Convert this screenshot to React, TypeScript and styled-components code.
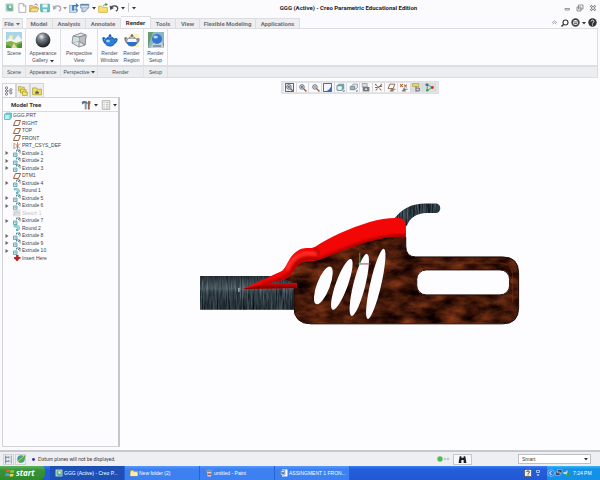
import React from "react";
import styled, { createGlobalStyle, css } from "styled-components";

const ui = `"Liberation Sans", Arial, sans-serif`;
const bold = `Roboto, "Liberation Sans", sans-serif`;

const GlobalStyle = createGlobalStyle`
  * { box-sizing: border-box; }
  body { margin: 0; background: #fbfbfd; color: #3a3b40; font: 5px/8px ${ui}; }
  button, select { font: inherit; color: inherit; margin: 0; padding: 0; border: 0; background: none; }
  svg { display: block; flex: none; }
`;

const Window = styled.div`
  min-height: 100vh;
  display: flex;
  flex-direction: column;
`;

/* ---------- title bar ---------- */
const TitleBar = styled.header`
  display: grid;
  grid-template-columns: auto 1fr auto;
  align-items: center;
  height: 15px;
`;
const QuickAccess = styled.div`
  display: flex;
  align-items: center;
  padding-left: 4px;
`;
const IconButton = styled.button<{ $w?: number }>`
  width: ${(p) => p.$w ?? 11}px;
  height: 11px;
  display: flex;
  align-items: center;
  justify-content: center;
`;
const Divider = styled.span`
  width: 1px;
  height: 9px;
  margin: 0 2px;
  background: #c8c9cd;
`;
const Title = styled.h1`
  margin: 0;
  font: bold 6px/8px ${bold};
  text-align: center;
  color: #222327;
  white-space: nowrap;
`;
const WindowButtons = styled.div<{ $gap: number }>`
  display: flex;
  justify-content: flex-end;
  gap: ${(p) => p.$gap}px;
  padding-right: 2px;
`;

/* ---------- ribbon ---------- */
const TabRow = styled.nav`
  display: flex;
  align-items: flex-end;
  height: 13px;
  padding-left: 2px;
`;
const RibbonTab = styled.button<{ $w: number; $active?: boolean }>`
  width: ${(p) => p.$w}px;
  height: 10px;
  display: flex;
  align-items: center;
  justify-content: center;
  gap: 2px;
  font: bold 6px/8px ${bold};
  color: #6f7076;
  background: #eeeef1;
  border: 1px solid #dcdde0;
  border-width: 1px 1px 0 0;
  white-space: nowrap;
  ${(p) =>
    p.$active &&
    css`
      height: 12px;
      padding-top: 1px;
      color: #2c2d31;
      background: #fcfcfe;
    `}
`;
const FileTab = styled(RibbonTab)`
  margin-right: 3px;
`;
const Spacer = styled.span`
  flex: 1;
`;
const Ribbon = styled.section`
  display: flex;
  margin: 0 2px;
  height: 50px;
  border: 1px solid #dcdde1;
  background: linear-gradient(#fcfcfe 36px, #dddee1 36px, #dddee1 38px, #ecedef 38px);
`;
const Group = styled.div<{ $w: number }>`
  width: ${(p) => p.$w}px;
  display: grid;
  grid-template-rows: 38px 1fr;
  border-right: 1px solid #e0e1e4;
`;
const GroupItems = styled.div`
  display: flex;
  justify-content: center;
`;
const RibbonButton = styled.button`
  min-width: 22px;
  display: flex;
  flex-direction: column;
  align-items: center;
  padding-top: 3px;
  line-height: 7px;
  color: #4a4b50;
  white-space: nowrap;
`;
const ButtonText = styled.span`
  margin-top: 2px;
`;
const Line = styled.span`
  display: flex;
  justify-content: center;
  align-items: center;
  gap: 2px;
`;
const GroupLabel = styled.div`
  display: flex;
  align-items: center;
  justify-content: center;
  gap: 1px;
  color: #4a4b50;
`;

/* ---------- work area ---------- */
const Work = styled.main`
  flex: 1;
  display: grid;
  grid-template-columns: 118px 1fr;
  padding-left: 2px;
`;
const Sidebar = styled.aside`
  display: flex;
  flex-direction: column;
  padding: 5px 0 3px;
`;
const PanelTabs = styled.div`
  display: flex;
`;
const PanelTab = styled.button<{ $active?: boolean }>`
  width: 14px;
  height: 14px;
  display: flex;
  align-items: center;
  justify-content: center;
  border: 1px solid #d5d6da;
  border-bottom-width: 0;
  background: ${(p) => (p.$active ? "#fcfcfe" : "#eeeff2")};
`;
const Panel = styled.section`
  flex: 1;
  border: 1px solid #d2d3d7;
  border-right: 2px solid #c6c7cb;
  background: #fcfcfe;
`;
const PanelHeader = styled.div`
  display: flex;
  align-items: center;
  height: 14px;
  padding-left: 8px;
  border-bottom: 1px solid #d9dade;
`;
const PanelTitle = styled.h2`
  margin: 0;
  flex: 1;
  font: bold 6px/8px ${bold};
  color: #333439;
`;
const Tree = styled.ul`
  list-style: none;
  margin: 0;
  padding: 0;
  height: 150px;
  display: grid;
  grid-auto-rows: minmax(0, 1fr);
`;
const TreeRow = styled.li<{ $root?: boolean; $dim?: boolean }>`
  display: grid;
  grid-template-columns: ${(p) => (p.$root ? "0 8px 1fr" : "9px 8px 1fr")};
  grid-template-rows: 100%;
  align-items: center;
  column-gap: 1px;
  line-height: 7px;
  color: ${(p) => (p.$dim ? "#c3c4c8" : "#3e3f44")};
  white-space: nowrap;
`;
const Expander = styled.button`
  width: 8px;
  height: 7px;
  display: flex;
  align-items: center;
  justify-content: center;
`;
const Viewport = styled.section`
  display: flex;
  flex-direction: column;
  align-items: center;
  padding-top: 3px;
  background: #fdfdff;
`;
const ViewToolbar = styled.div`
  width: 158px;
  height: 13px;
  display: grid;
  grid-template-columns: repeat(12, 1fr);
  padding: 1px 2px;
  border: 1px solid #dedfe2;
  background: #e3e4e8;
`;
const ViewButton = styled.button<{ $on?: boolean }>`
  display: flex;
  align-items: center;
  justify-content: center;
  border-right: 1px solid #d7d8dc;
  background: ${(p) => (p.$on ? "#dcdde1" : "#fafafc")};
`;
const ModelArea = styled.div`
  width: 67%;
  margin-top: 109px;
`;

/* ---------- status bar ---------- */
const StatusBar = styled.footer`
  display: flex;
  align-items: center;
  height: 16px;
  padding: 0 9px 0 3px;
  border-top: 2px solid #c7c8cb;
  background: #eeeff2;
`;
const StatusToggle = styled.button`
  width: 11px;
  height: 11px;
  margin-right: 1px;
  display: flex;
  align-items: center;
  justify-content: center;
  border: 1px solid #d0d1d5;
`;
const Message = styled.p`
  margin: 0 0 0 5px;
  flex: 1;
  display: flex;
  align-items: center;
  gap: 3px;
  font-family: Lato, ${ui};
`;
const FindButton = styled.button`
  width: 19px;
  height: 11px;
  margin: 0 46px 0 3px;
  display: flex;
  align-items: center;
  justify-content: center;
  border: 1px solid #c6c7cb;
  background: #f8f8fa;
`;
const FilterBox = styled.div`
  display: flex;
  width: 73px;
  height: 10px;
  align-items: center;
  padding-right: 2px;
  border: 1px solid #bfc0c6;
  background: #fff;
`;
const Filter = styled.select`
  flex: 1;
  height: 8px;
  padding-left: 3px;
  appearance: none;
  outline: 0;
`;

/* ---------- taskbar ---------- */
const Taskbar = styled.footer`
  display: flex;
  height: 14px;
  color: #fff;
  background: linear-gradient(#3d80ee, #245edc 3px, #2258d4);
`;
const Start = styled.button`
  width: 45px;
  margin-right: 5px;
  display: flex;
  align-items: center;
  gap: 1px;
  padding-left: 5px;
  border-radius: 0 4px 6px 0;
  font: italic bold 8px/12px "Open Sans", "Noto Sans", sans-serif;
  color: #fff;
  background: linear-gradient(#5eb35e, #389238 4px, #2f8a2f);
`;
const Task = styled.button<{ $active?: boolean }>`
  flex: 0 1 75px;
  display: flex;
  align-items: center;
  gap: 1px;
  padding-left: 5px;
  border-right: 1px solid #2a62d6;
  color: #fff;
  white-space: nowrap;
  background: ${(p) => (p.$active ? "#1d4fb5" : "linear-gradient(#5a98fa, #3c80f2 3px)")};
`;
const TrayOuter = styled.div`
  display: flex;
  align-items: center;
  gap: 2px;
  margin-left: auto;
  padding-right: 5px;
`;
const Tray = styled.div`
  display: flex;
  align-items: center;
  width: 53px;
  background: linear-gradient(#3fb4f5, #1391e8 3px);
`;
const Clock = styled.time`
  margin-left: 2px;
  white-space: nowrap;
`;

/* ---------- icons ---------- */
type IconProps = { s?: number; children: React.ReactNode };
const Ico = ({ s = 10, children }: IconProps) => (
  <svg width={s} height={s} viewBox="0 0 16 16" fill="none" aria-hidden="true">
    {children}
  </svg>
);
const Caret = ({ c = "#333" }: { c?: string }) => (
  <svg width="4" height="4" viewBox="0 0 4 4" aria-hidden="true">
    <path d="M0 1h4L2 3.4z" fill={c} />
  </svg>
);
const Logo = ({ s = 9 }: { s?: number }) => (
  <Ico s={s}>
    <rect x="1" y="1" width="14" height="14" rx="1" fill="#a9d3c6" />
    <path d="M4 3h8l2 3v8H6l-3-3z" fill="#7dbb83" />
    <path d="M4 3l9 10H8L4 9z" fill="#5f9fcb" />
    <circle cx="9" cy="7" r="2.4" fill="#e5f3c2" />
  </Ico>
);
const NewDoc = () => (
  <Ico>
    <path d="M3 1h7l4 4v10H3z" fill="#fff" stroke="#85868c" />
    <path d="M10 1v4h4" stroke="#85868c" />
  </Ico>
);
const Open = () => (
  <Ico>
    <path d="M1 14V4h5l1 2h6v3" fill="#f2d377" stroke="#b08a2c" />
    <path d="M1 14l3-6h12l-3 6z" fill="#f6df8c" stroke="#b08a2c" />
    <path d="M9 3c2-2 4-1 5 1" stroke="#55606c" strokeWidth="1.3" />
  </Ico>
);
const Save = () => (
  <Ico>
    <path d="M1 2h14v12H2l-1-1z" fill="#69c4c9" stroke="#3c8d96" />
    <path d="M4 2h8v5H4z" fill="#e9f8f8" />
    <path d="M5 10h6v4H5z" fill="#e9f8f8" />
  </Ico>
);
const Undo = ({ c }: { c: string }) => (
  <Ico>
    <path d="M3 8c2-5 11-4 11 1 0 2-1 3-3 4" stroke={c} strokeWidth="2" />
    <path d="M1 4l1 7 6-3z" fill={c} />
  </Ico>
);
const Regen = () => (
  <Ico>
    <rect x="1" y="4" width="11" height="11" fill="#c4def2" stroke="#7f9dc0" />
    <path d="M5 3h6V0l5 4-5 4V5H8v7H5z" fill="#3d7cc0" />
    <path d="M9 10h4v4" stroke="#6b7c96" strokeWidth="1.6" />
  </Ico>
);
const Windows = () => (
  <Ico>
    <path d="M1 2h13v6H1z" fill="#d6e5f4" stroke="#56789f" />
    <path d="M1 2h13v2H1z" fill="#56789f" />
    <path d="M3 8v6h5l5-6" fill="#c3d4e4" stroke="#56789f" />
  </Ico>
);
const CloseFolder = () => (
  <Ico>
    <path d="M1 5h5l1 2h8v8H1z" fill="#f6e169" stroke="#c0a236" />
    <path d="M9 5c0-2 2-3 4-3" stroke="#4d8f3f" strokeWidth="1.6" />
    <path d="M12 0l4 2-4 3z" fill="#4d8f3f" />
  </Ico>
);
const Landscape = () => (
  <Ico s={16}>
    <rect width="16" height="16" fill="#a9d3e8" />
    <circle cx="5" cy="5" r="2" fill="#f6ef8f" />
    <path d="M0 9l4-4 4 3 4-5 4 5v8H0z" fill="#f3f4ef" />
    <path d="M0 10l5-1 5 2 6-2v7H0z" fill="#7fb34c" />
    <path d="M5 16l3-5 3 5z" fill="#e7d793" />
    <path d="M0 13l4 1 2 2H0zM11 13l5-2v5h-4z" fill="#4f8f38" />
  </Ico>
);
const Sphere = () => (
  <Ico s={16}>
    <defs>
      <radialGradient id="ball" cx=".4" cy=".28" r=".65">
        <stop offset="0" stopColor="#f2f4f6" />
        <stop offset=".35" stopColor="#7e858c" />
        <stop offset="1" stopColor="#23282e" />
      </radialGradient>
    </defs>
    <circle cx="8" cy="8" r="7.4" fill="url(#ball)" />
  </Ico>
);
const Box3d = () => (
  <Ico s={16}>
    <path d="M2 4l8-3 5 2-1 10-6 2-7-4z" fill="#e2e5e7" stroke="#8b9197" />
    <path d="M2 4l6 1 7-2M8 5v10M8 9l6 4M1 11l7-2" stroke="#8b9197" />
    <path d="M8 5l7-2-1 10-6-4z" fill="#b9bfc4" stroke="#8b9197" />
    <path d="M3 5l5 1v3l-6 2z" fill="#cfe0d6" />
  </Ico>
);
const Teapot = ({ region }: { region?: boolean }) => (
  <Ico s={16}>
    {region && <rect x="5" y="2" width="10" height="13" fill="#fbf3c4" />}
    <path d="M3 7C1 4 0 7 3 11M12 8c3-3 4 0 1 3" stroke={region ? "#7f8084" : "#1f68bd"} strokeWidth="1.6" />
    <path d="M3 8c0-3 10-3 10 0 1 4-2 6-5 6S2 12 3 8z" fill={region ? "#f7f8fa" : "#2c7fd6"} stroke={region ? "#808187" : "#1b5cab"} />
    {region && <path d="M3 10h10c0 3-2 4-5 4s-5-1-5-4z" fill="#2c6fd0" />}
    <path d="M5 6c1-2 5-2 6 0z" fill={region ? "#e2e3e6" : "#5fa9ec"} stroke={region ? "#808187" : "#1b5cab"} strokeWidth=".7" />
    <circle cx="8" cy="3.4" r="1.2" fill={region ? "#66676d" : "#1b5cab"} />
    {!region && <ellipse cx="6" cy="9" rx="2" ry="1.2" fill="#a9d6f8" />}
  </Ico>
);
const Setup = () => (
  <Ico s={16}>
    <rect width="16" height="16" fill="#8eb6c2" />
    <path d="M0 16L5 0H0zM10 16l6-5v5z" fill="#6b9b72" />
    <path d="M2 16L7 9l7 1 2 6z" fill="#c3cfd6" />
    <circle cx="9" cy="7" r="5" fill="#3377cf" />
    <ellipse cx="7.6" cy="5" rx="2.2" ry="1.6" fill="#b5d9fb" />
    <path d="M5 13h8v2H5z" fill="#7f98ae" />
  </Ico>
);
const Plane = () => (
  <Ico s={8}>
    <path d="M5 3h10l-4 10H1z" stroke="#9b5f3d" strokeWidth="2" />
  </Ico>
);
const Csys = () => (
  <Ico s={8}>
    <path d="M2 2v12M4 3l10 10M14 3L4 13M9 1v14" stroke="#a8704f" strokeWidth="1.6" />
  </Ico>
);
const Extrude = () => (
  <Ico s={8}>
    <path d="M1 8h7v7H1z" fill="#d9f1f3" stroke="#4c9aa2" strokeWidth="1.6" />
    <path d="M3 11h3v3" stroke="#4c9aa2" />
    <path d="M7 5V2h7v7M10 6l4-4" stroke="#3f6f7c" strokeWidth="1.6" />
  </Ico>
);
const Round = () => (
  <Ico s={8}>
    <path d="M2 3h6c4 0 6 3 5 7l-4 4V9C9 7 7 6 2 6z" fill="#9bdde0" stroke="#4c9aa2" />
    <path d="M9 9l-3 1v4h3z" fill="#5bb6bc" />
  </Ico>
);
const Sketch = () => (
  <Ico s={8}>
    <rect y="1" width="15" height="14" fill="#dfe0e2" />
    <path d="M2 13c2-8 8-9 12-3" stroke="#bfc0c4" strokeWidth="1.6" />
  </Ico>
);
const Part = () => (
  <Ico s={8}>
    <path d="M1 5l4-3h10v9l-3 4H1z" fill="#68cfd4" stroke="#3b8f98" />
    <path d="M2 6h9v8H2z" fill="#b7eff0" />
  </Ico>
);
const Insert = () => (
  <Ico s={8}>
    <path d="M3 6h4V2h4v4h4l-6 8-6-4z" fill="#c21d1d" />
    <path d="M2 8h13M8 2v12" stroke="#c21d1d" strokeWidth="3" />
  </Ico>
);
const Folders = ({ star }: { star?: boolean }) => (
  <Ico>
    {star ? (
      <>
        <path d="M1 3h6l1 2h7v9H1z" fill="#f2e260" stroke="#9c8a20" />
        <path d="M8 6l1 3h3l-2 2 1 2-3-1-3 1 1-2-2-2h3z" fill="#57585c" />
      </>
    ) : (
      <>
        <path d="M1 1h4l1 1h4v6H1z" fill="#f2e260" stroke="#9c8a20" />
        <path d="M4 5h4l1 1h4v5H4z" fill="#f2e260" stroke="#9c8a20" />
        <path d="M7 9h3l1 1h4v5H7z" fill="#f6e96f" stroke="#9c8a20" />
      </>
    )}
  </Ico>
);
const TreeIcon = () => (
  <Ico>
    <path d="M4 3v10M4 8h6" stroke="#77787d" strokeWidth="1.2" />
    <g fill="#fff" stroke="#66676c" strokeWidth="1.3">
      <circle cx="4" cy="3" r="1.8" />
      <circle cx="4" cy="8" r="1.8" />
      <circle cx="4" cy="13" r="1.8" />
      <circle cx="11" cy="6" r="1.8" />
      <circle cx="11" cy="11" r="1.8" />
    </g>
  </Ico>
);
const Tools = () => (
  <Ico>
    <path d="M1 4c2-3 6-3 9-1v3H7L5 5 2 7z" fill="#4f6f93" />
    <path d="M6 6h3v9H6z" fill="#7d94ac" />
    <path d="M12 1l3 1v4l-1 1v8h-3V7l-1-2z" fill="#9d5f45" />
  </Ico>
);
const ListIcon = () => (
  <Ico>
    <path d="M2 1h12v14H2z" fill="#f5f5f2" stroke="#8c8d90" />
    <path d="M4 4h2M8 4h4M4 7h2M8 7h4M4 10h2M8 10h4M4 13h2M8 13h4" stroke="#9a9b90" />
  </Ico>
);
const Zoomer = ({ kind }: { kind: "fit" | "in" | "out" }) => (
  <Ico s={9}>
    {kind === "fit" && <rect x="1" y="1" width="14" height="14" fill="#eef2fb" stroke="#41568c" strokeWidth="1.6" />}
    <circle cx="7" cy="7" r="4" fill="#edf1f6" stroke="#55606f" strokeWidth="1.6" />
    <path d="M10 10l5 5" stroke="#8c5a38" strokeWidth="2.4" />
    <path d={kind === "out" ? "M5 7h4" : "M5 7h4M7 5v4"} stroke="#333" strokeWidth="1.2" />
  </Ico>
);
const Repaint = () => (
  <Ico s={9}>
    <rect x="1" y="1" width="14" height="14" fill="#f4f7fd" stroke="#3c5c9c" strokeWidth="1.6" />
    <path d="M15 4v11H3c7-1 10-5 12-11z" fill="#3c68b8" />
  </Ico>
);
const Shade = ({ wire }: { wire?: boolean }) => (
  <Ico s={9}>
    <path d={wire ? "M5 5l2-3h8v6l-3 3H5z" : "M2 5l3-3h9v8l-3 3H2z"} fill={wire ? "#e3e6ea" : "#5bb8bd"} stroke="#50707a" />
    <path d={wire ? "M2 6h8v6H2z" : "M2 5h9v8H2z"} fill={wire ? "#aab0b7" : "#e6fafa"} stroke="#50707a" />
    <path d="M12 15h3v-3z" fill="#333" />
  </Ico>
);
const Camera = () => (
  <Ico s={9}>
    <path d="M2 1h9v6H2z" fill="#dcdde0" stroke="#77787c" />
    <path d="M3 7h12v8H3z" fill="#77797f" />
    <circle cx="9" cy="11" r="2.6" fill="#e8e9eb" stroke="#44454a" />
  </Ico>
);
const Datum = ({ n }: { n: number }) => (
  <Ico s={9}>
    {n === 0 && <path d="M2 2l12 12M14 2L2 14M2 8h4M10 6h4" stroke="#8e5c3d" strokeWidth="1.8" strokeDasharray="4 1.5" />}
    {n === 1 && <path d="M5 2h9l-3 8H2z" stroke="#8e5c3d" strokeWidth="1.6" />}
    {n === 2 && <path d="M2 2l5 5M7 2L2 7M9 3l5 5M14 3L9 8" stroke="#a8643c" strokeWidth="1.8" />}
    {n > 0 && <path d="M7 11h8M5 14h7M9 9v5" stroke="#77706c" strokeWidth="2" />}
  </Ico>
);
const Annot = () => (
  <Ico s={9}>
    <path d="M1 1h11v5H1z" fill="#e6e06a" stroke="#97902f" />
    <path d="M7 6v9M7 9h6v5H7" stroke="#616266" strokeWidth="1.6" />
  </Ico>
);
const Spin = () => (
  <Ico s={9}>
    <path d="M4 4v9M5 3l7 5-7 5" stroke="#3d9f52" strokeWidth="1.6" />
    <path d="M1 1h5v4H1z" fill="#3c68a8" />
    <circle cx="13" cy="8" r="2.6" fill="#c93030" />
    <circle cx="4" cy="13" r="2.2" fill="#3fa050" />
  </Ico>
);
const Globe = () => (
  <Ico>
    <circle cx="8" cy="8" r="6" fill="#3d9bb5" />
    <path d="M3 11C7 4 11 3 15 2c0 6-4 11-9 12z" fill="#57a64e" />
    <path d="M2 13L13 3" stroke="#e2d35b" strokeWidth="1.4" />
  </Ico>
);
const StatusTree = () => (
  <Ico s={9}>
    <path d="M3 1v14M3 4h5M3 11h5" stroke="#4e6a96" strokeWidth="1.5" />
    <path d="M7 2h3v4H7zM7 9h3v4H7z" fill="#8fa7c8" />
    <path d="M13 1v14" stroke="#8b8c90" strokeWidth="1.5" />
  </Ico>
);
const Binoculars = () => (
  <Ico s={9}>
    <path d="M3 2h3v3h4V2h3l2 12h-5V9H6v5H1z" fill="#1e1f22" />
  </Ico>
);
const Flag = () => (
  <Ico>
    <path d="M2 3c2-1 4-1 6 0L7 7C5 6 3 6 1 7z" fill="#ee5a2c" />
    <path d="M9 3c2 1 4 1 6 0l-1 4c-2 1-4 1-6 0z" fill="#8ccf3c" />
    <path d="M1 9c2-1 4-1 6 0l-1 4c-2-1-4-1-6 0z" fill="#5a9bf2" />
    <path d="M8 9c2 1 4 1 6 0l-1 4c-2 1-4 1-6 0z" fill="#f8d13e" />
  </Ico>
);
const Paint = () => (
  <Ico s={8}>
    <path d="M4 6h9l-1 9H5z" fill="#c6d2de" />
    <path d="M5 6L3 1M8 6V0M11 6l3-5" stroke="#d89b3c" strokeWidth="2" />
    <path d="M5 9h7v3H5z" fill="#b05050" />
  </Ico>
);
const Word = () => (
  <Ico s={8}>
    <path d="M4 1h11v14H4z" fill="#fff" />
    <path d="M1 3h9v9H1z" fill="#dbe6f8" stroke="#3560a8" />
    <path d="M3 5l1 5 2-4 1 4 2-5" stroke="#2b579a" strokeWidth="1.3" />
  </Ico>
);
const TaskFolder = () => (
  <Ico s={8}>
    <path d="M1 3h6l1 2h7v9H1z" fill="#f7e08a" stroke="#c39a33" />
    <path d="M1 7h14v7H1z" fill="#fbeeb0" />
  </Ico>
);

/* ---------- data ---------- */
const tabs: [string, number][] = [
  ["Model", 27],
  ["Analysis", 33],
  ["Annotate", 35],
  ["Render", 30],
  ["Tools", 25],
  ["View", 24],
  ["Flexible Modeling", 56],
  ["Applications", 44],
];

type Kind = "part" | "plane" | "csys" | "extrude" | "round" | "sketch" | "insert";
const kinds: Record<Kind, React.FC> = {
  part: Part,
  plane: Plane,
  csys: Csys,
  extrude: Extrude,
  round: Round,
  sketch: Sketch,
  insert: Insert,
};
const rows: [Kind, string][] = [
  ["part", "GGG.PRT"],
  ["plane", "RIGHT"],
  ["plane", "TOP"],
  ["plane", "FRONT"],
  ["csys", "PRT_CSYS_DEF"],
  ["extrude", "Extrude 1"],
  ["extrude", "Extrude 2"],
  ["extrude", "Extrude 3"],
  ["plane", "DTM1"],
  ["extrude", "Extrude 4"],
  ["round", "Round 1"],
  ["extrude", "Extrude 5"],
  ["extrude", "Extrude 6"],
  ["sketch", "Sketch 1"],
  ["extrude", "Extrude 7"],
  ["round", "Round 2"],
  ["extrude", "Extrude 8"],
  ["extrude", "Extrude 9"],
  ["extrude", "Extrude 10"],
  ["insert", "Insert Here"],
];

const viewTools: [string, React.ReactNode, boolean?][] = [
  ["Refit", <Zoomer kind="fit" />],
  ["Zoom In", <Zoomer kind="in" />],
  ["Zoom Out", <Zoomer kind="out" />],
  ["Repaint", <Repaint />],
  ["Display Style", <Shade />],
  ["Saved Orientations", <Shade wire />],
  ["View Manager", <Camera />],
  ["Datum Display", <Datum n={0} />],
  ["Plane Display", <Datum n={1} />],
  ["Csys Display", <Datum n={2} />],
  ["Annotation Display", <Annot />, true],
  ["Spin Center", <Spin />, true],
];

/* Chainsaw model: steel bar and hook, red cover, wooden body */
const Chainsaw = () => (
  <svg width="100%" viewBox="199 203 322 123" role="img" aria-label="Chainsaw model">
    <defs>
      <filter id="wood" x="0" y="0" width="1" height="1" colorInterpolationFilters="sRGB">
        <feTurbulence type="fractalNoise" baseFrequency="0.045 0.09" numOctaves="5" seed="8" />
        <feColorMatrix values="0.8 0 0 0 -0.13  0.38 0 0 0 -0.09  0.16 0 0 0 -0.04  0 0 0 0 1" />
        <feComposite in2="SourceGraphic" operator="in" />
      </filter>
      <filter id="steel" x="0" y="0" width="1" height="1" colorInterpolationFilters="sRGB">
        <feTurbulence type="fractalNoise" baseFrequency="0.8 0.05" numOctaves="4" seed="4" />
        <feColorMatrix values="0.5 0 0 0 -0.06  0.5 0 0 0 -0.01  0.5 0 0 0 0.02  0 0 0 0 1" />
        <feComposite in2="SourceGraphic" operator="in" />
      </filter>
      <linearGradient id="sheen" x1="0" y1="0" x2="0" y2="1">
        <stop offset="0" stopColor="#000" stopOpacity=".3" />
        <stop offset=".38" stopColor="#a9c0c8" stopOpacity=".22" />
        <stop offset=".6" stopColor="#000" stopOpacity=".05" />
        <stop offset="1" stopColor="#000" stopOpacity=".25" />
      </linearGradient>
      <linearGradient id="lip" x1="0" y1="0" x2="0" y2="1">
        <stop offset="0" stopColor="#d80404" />
        <stop offset="1" stopColor="#700000" />
      </linearGradient>
      <filter id="soft">
        <feGaussianBlur stdDeviation="1.6" />
      </filter>
      <clipPath id="redClip">
        <path d="M243 289L282 271C288 267 288 255 301 249C306 247 311 249 315 247C330 237 350 228 370 222C380 219 389 218 398 218Q406 218 406 225V237H393C375 238 355 246 337 253L319 260C313 262 304 260 299 264C293 269 292 277 283 280L265 284L297 283V288Z" />
      </clipPath>
    </defs>
    <path d="M200 276h97v34h-97z" fill="#35434a" filter="url(#steel)" />
    <path d="M200 276h97v34h-97z" fill="url(#sheen)" />
    <path d="M395 218C403 208 413 203 428 203.500H437Q441 205 440.500 209Q440 213 436 213H427C417 213 410 218 407 226Z" fill="#2e3d47" filter="url(#steel)" />
    <path
      fillRule="evenodd"
      filter="url(#wood)"
      fill="#4a1c0c"
      d="M294 284L285 279L300 254L330 242L380 226L406 224V246Q406 257 416 257H503Q519 257 519 273V308Q519 324 503 324H311Q294 324 294 307ZM427 270Q417 270 417 280V285Q417 295 427 295H500Q510 295 510 285V280Q510 270 500 270Z"
    />
    <path d="M406 237V246Q406 257 416 257H503Q519 257 519 273V308Q519 324 503 324H311Q294 324 294 307V289" stroke="#1d0904" fill="none" />
    <path d="M417 263H500Q513 264 513 275V302" stroke="#8b3f20" strokeOpacity=".4" fill="none" />
    <rect x="417" y="270" width="93" height="25" rx="9.500" stroke="#2a0e06" fill="none" />
    <g fill="#fdfdff">
      <ellipse rx="6.500" ry="20" transform="translate(323.500 285.500) rotate(21)" />
      <ellipse rx="6" ry="27" transform="translate(342 284.500) rotate(20)" />
      <ellipse rx="6" ry="32" transform="translate(359.500 285) rotate(14)" />
      <ellipse rx="5.500" ry="36" transform="translate(376 284) rotate(13)" />
    </g>
    <g clipPath="url(#redClip)">
      <path d="M240 215h170v80H240z" fill="#f20606" />
      <path d="M318 261L350 248Q380 236 408 236" stroke="#a00000" strokeWidth="4" fill="none" filter="url(#soft)" />
      <path d="M262 285Q290 279 294 268T319 259" stroke="#9c0000" strokeWidth="3" fill="none" filter="url(#soft)" />
      <path d="M287 270Q292 256 306 253L318 254" stroke="#ff3a30" strokeWidth="3" fill="none" filter="url(#soft)" />
      <path d="M314 248q5 2 5 8" stroke="#a80000" strokeWidth="2" fill="none" filter="url(#soft)" />
      <path d="M243 289L268 283H297V289Z" fill="url(#lip)" />
    </g>
    <path d="M360 253v11" stroke="#35b53c" />
    <path d="M360 264h11" stroke="#c3363a" />
    <path d="M359 263h2v2h-2z" fill="#38d4dc" />
    <path d="M239 288v4" stroke="#dce4e8" />
  </svg>
);

const ribbonItem = (icon: React.ReactNode, a: string, b?: string, caret?: boolean) => (
  <RibbonButton>
    {icon}
    <ButtonText>
      <Line>{a}</Line>
      {b && (
        <Line>
          {b}
          {caret && <Caret />}
        </Line>
      )}
    </ButtonText>
  </RibbonButton>
);

export default function App() {
  return (
    <Window>
      <GlobalStyle />
      <TitleBar>
        <QuickAccess>
          <IconButton aria-label="Creo"><Logo /></IconButton>
          <IconButton $w={13} aria-label="New"><NewDoc /></IconButton>
          <IconButton aria-label="Open"><Open /></IconButton>
          <IconButton $w={12} aria-label="Save"><Save /></IconButton>
          <IconButton aria-label="Undo"><Undo c="#a9aaaf" /></IconButton>
          <IconButton $w={6} aria-label="Undo list"><Caret c="#999" /></IconButton>
          <IconButton aria-label="Regenerate"><Regen /></IconButton>
          <IconButton $w={12} aria-label="Windows"><Windows /></IconButton>
          <IconButton $w={6} aria-label="Window list"><Caret /></IconButton>
          <IconButton aria-label="Close"><CloseFolder /></IconButton>
          <IconButton aria-label="Undo last"><Undo c="#4a4b50" /></IconButton>
          <IconButton $w={7} aria-label="Undo options"><Caret /></IconButton>
          <Divider />
          <IconButton $w={5} aria-label="Customize"><Caret /></IconButton>
        </QuickAccess>
        <Title>GGG (Active) - Creo Parametric Educational Edition</Title>
        <WindowButtons $gap={2}>
          <IconButton aria-label="Minimize"><Ico s={8}><path d="M4 9h9v3H4z" stroke="#77787d" strokeWidth="1.5" /></Ico></IconButton>
          <IconButton aria-label="Restore">
            <Ico s={8}><path d="M5 2h9v8H5zM2 6h8v8H2z" stroke="#77787d" strokeWidth="1.6" /></Ico>
          </IconButton>
          <IconButton aria-label="Close window">
            <Ico s={8}><path d="M3 3l10 10M13 3L3 13" stroke="#77787d" strokeWidth="4" /><path d="M3 3l10 10M13 3L3 13" stroke="#fff" strokeWidth="1.5" /></Ico>
          </IconButton>
        </WindowButtons>
      </TitleBar>

      <TabRow>
        <FileTab $w={21}>File <Caret c="#666" /></FileTab>
        {tabs.map(([name, w]) => (
          <RibbonTab key={name} $w={w} $active={name === "Render"}>{name}</RibbonTab>
        ))}
        <Spacer />
        <WindowButtons $gap={0}>
          <IconButton $w={9} aria-label="Collapse ribbon"><Ico s={7}><path d="M2 9l6-5 6 5M4 12l4-4 4 4" stroke="#88898e" strokeWidth="1.6" /></Ico></IconButton>
          <IconButton aria-label="Search"><Ico s={8}><circle cx="9" cy="7" r="5" stroke="#333439" strokeWidth="2.2" /><path d="M5 11l-4 4" stroke="#333439" strokeWidth="3" /></Ico></IconButton>
          <IconButton aria-label="Learning"><Ico s={9}><circle cx="8" cy="8" r="6" stroke="#44454a" strokeWidth="3" /><path d="M4 7h8M5 10h6" stroke="#44454a" strokeWidth="1.5" /></Ico></IconButton>
          <IconButton $w={6} aria-label="Learning options"><Caret /></IconButton>
          <IconButton aria-label="Help"><Ico s={9}><circle cx="8" cy="8" r="7.500" fill="#333439" /><path d="M5.500 6c0-3 5-3 5 0 0 2-2.500 2-2.500 4M8 11.500v2" stroke="#fff" strokeWidth="1.600" /></Ico></IconButton>
        </WindowButtons>
      </TabRow>

      <Ribbon>
        <Group $w={23}>
          <GroupItems>{ribbonItem(<Landscape />, "Scene")}</GroupItems>
          <GroupLabel>Scene</GroupLabel>
        </Group>
        <Group $w={35}>
          <GroupItems>{ribbonItem(<Sphere />, "Appearance", "Gallery", true)}</GroupItems>
          <GroupLabel>Appearance</GroupLabel>
        </Group>
        <Group $w={37}>
          <GroupItems>{ribbonItem(<Box3d />, "Perspective", "View")}</GroupItems>
          <GroupLabel>Perspective <Caret /></GroupLabel>
        </Group>
        <Group $w={46}>
          <GroupItems>
            {ribbonItem(<Teapot />, "Render", "Window")}
            {ribbonItem(<Teapot region />, "Render", "Region")}
          </GroupItems>
          <GroupLabel>Render</GroupLabel>
        </Group>
        <Group $w={24}>
          <GroupItems>{ribbonItem(<Setup />, "Render", "Setup")}</GroupItems>
          <GroupLabel>Setup</GroupLabel>
        </Group>
      </Ribbon>

      <Work>
        <Sidebar>
          <PanelTabs>
            <PanelTab $active aria-label="Model Tree"><TreeIcon /></PanelTab>
            <PanelTab aria-label="Folder Browser"><Folders /></PanelTab>
            <PanelTab aria-label="Favorites"><Folders star /></PanelTab>
          </PanelTabs>
          <Panel>
            <PanelHeader>
              <PanelTitle>Model Tree</PanelTitle>
              <IconButton $w={12} aria-label="Settings"><Tools /></IconButton>
              <IconButton $w={8} aria-label="Settings list"><Caret /></IconButton>
              <IconButton $w={12} aria-label="Show"><ListIcon /></IconButton>
              <IconButton $w={6} aria-label="Show list"><Caret /></IconButton>
            </PanelHeader>
            <Tree>
              {rows.map(([kind, name]) => {
                const Icon = kinds[kind];
                return (
                  <TreeRow key={name} $root={kind === "part"} $dim={kind === "sketch"}>
                    {kind === "extrude" ? (
                      <Expander aria-label={`Expand ${name}`}>
                        <svg width="4" height="4" viewBox="0 0 4 4"><path d="M0.500 0v4L3.500 2z" fill="#66676c" /></svg>
                      </Expander>
                    ) : (
                      <span />
                    )}
                    <Icon />
                    <span>{name}</span>
                  </TreeRow>
                );
              })}
            </Tree>
          </Panel>
        </Sidebar>
        <Viewport>
          <ViewToolbar>
            {viewTools.map(([name, icon, on]) => (
              <ViewButton key={name} $on={on} aria-label={name}>{icon}</ViewButton>
            ))}
          </ViewToolbar>
          <ModelArea>
            <Chainsaw />
          </ModelArea>
        </Viewport>
      </Work>

      <StatusBar>
        <StatusToggle aria-label="Navigator"><StatusTree /></StatusToggle>
        <StatusToggle aria-label="Browser"><Globe /></StatusToggle>
        <Message>
          <svg width="3" height="3" viewBox="0 0 3 3"><circle cx="1.500" cy="1.500" r="1.400" fill="#2a2ab0" /></svg>
          Datum planes will not be displayed.
        </Message>
        <svg width="13" height="6" viewBox="0 0 13 6" aria-hidden="true">
          <circle cx="3" cy="3" r="2.700" fill="#4fbe52" />
          <circle cx="8" cy="3" r="1.300" fill="#c6c7ca" />
          <circle cx="11" cy="3" r="1.300" fill="#c6c7ca" />
        </svg>
        <FindButton aria-label="Find"><Binoculars /></FindButton>
        <FilterBox>
          <Filter aria-label="Selection filter"><option>Smart</option></Filter>
          <Caret />
        </FilterBox>
      </StatusBar>

      <Taskbar>
        <Start><Flag />start</Start>
        <Task $active><Logo s={8} />GGG (Active) - Creo P...</Task>
        <Task><TaskFolder />New folder (2)</Task>
        <Task><Paint />untitled - Paint</Task>
        <Task><Word />ASSINGMENT 1 FRON...</Task>
        <TrayOuter>
          <Ico s={8}><rect x="1" y="1" width="14" height="14" fill="#f3f0dc" stroke="#333" /><path d="M5 6c0-3 6-3 6 0 0 2-3 2-3 4M8 11v2" stroke="#333" strokeWidth="1.800" /></Ico>
          <Ico s={8}><path d="M5 3h6v4H5z" stroke="#cfe0ff" strokeWidth="1.500" /><path d="M5 11h6l-3 3z" fill="#fff" /></Ico>
        </TrayOuter>
        <Tray>
          <Ico s={8}><circle cx="8" cy="8" r="7" fill="#2f7fe8" stroke="#bfe0ff" /><path d="M9 4L5 8l4 4" stroke="#fff" strokeWidth="2" /></Ico>
          <Ico s={8}><path d="M5 1h9v7H5zM1 6h9v7H1z" fill="#34466e" stroke="#c9d6ea" /></Ico>
          <Ico s={8}><path d="M1 6h4l4-4v12l-4-4H1z" fill="#c7d3de" /><circle cx="11" cy="11" r="4" fill="#3d9c48" /></Ico>
          <Clock>7:24 PM</Clock>
        </Tray>
      </Taskbar>
    </Window>
  );
}
